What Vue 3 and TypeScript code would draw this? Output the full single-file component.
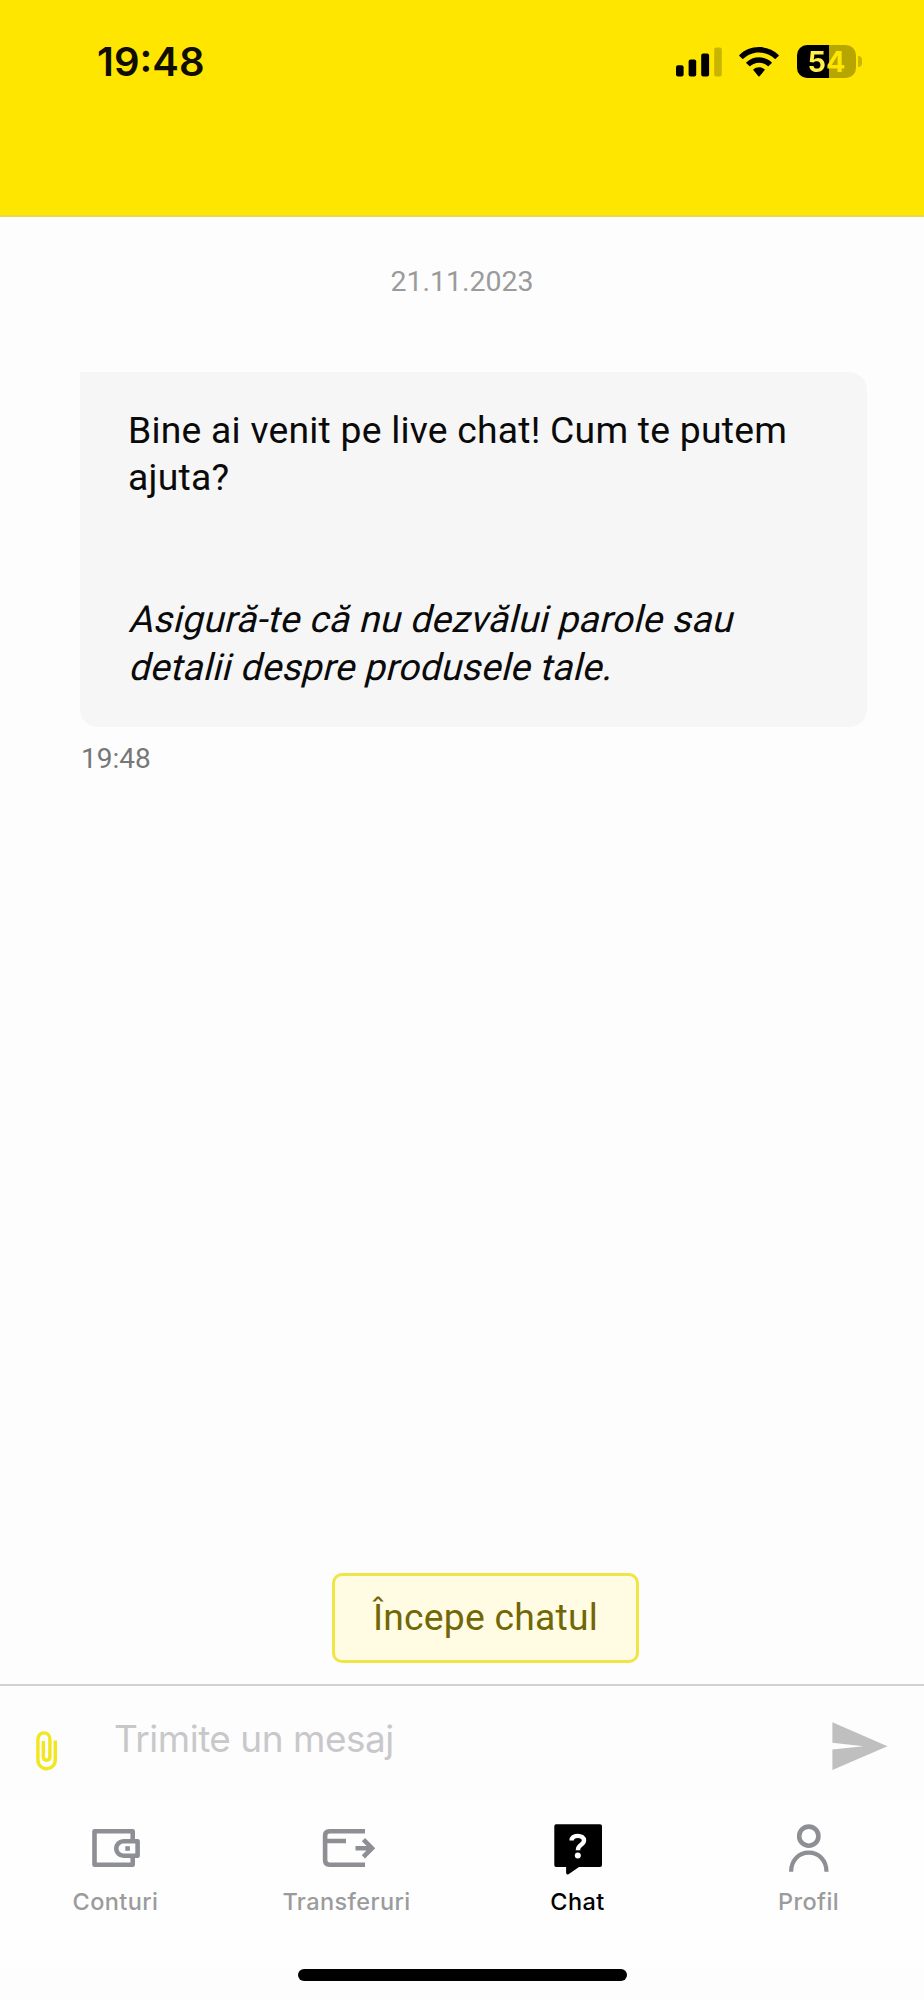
<script setup lang="ts">
interface Tab {
  id: 'accounts' | 'transfers' | 'chat' | 'profile'
  label: string
}

const tabs: Tab[] = [
  { id: 'accounts', label: 'Conturi' },
  { id: 'transfers', label: 'Transferuri' },
  { id: 'chat', label: 'Chat' },
  { id: 'profile', label: 'Profil' },
]
const activeTab: Tab['id'] = 'chat'

const greeting: string[] = ['Bine ai venit pe live chat! Cum te putem', 'ajuta?']
const warning: string[] = ['Asigură-te că nu dezvălui parole sau', 'detalii despre produsele tale.']
</script>

<template>
  <div class="screen">
    <header class="header">
      <span class="clock">19:48</span>
      <div class="status">
        <svg class="signal" width="46" height="30" viewBox="0 0 46 30">
          <rect x="0" y="18.3" width="7.6" height="11.2" rx="2" />
          <rect x="12.6" y="12.6" width="7.6" height="16.9" rx="2" />
          <rect x="25.2" y="6.6" width="7.9" height="22.9" rx="2" />
          <rect x="38.2" y="0.4" width="7.6" height="29.1" rx="2" fill="#c8b500" />
        </svg>
        <svg class="wifi" width="40" height="30" viewBox="0 0 40 30">
          <path d="M20 0C12.400 0 5.400 3 .4 7.900Q0 8.400 .4 8.900L3.300 11.800Q3.800 12.200 4.300 11.800C8.400 7.800 14 5.500 20 5.500S31.600 7.800 35.700 11.800Q36.200 12.200 36.700 11.800L39.600 8.900Q40 8.400 39.600 7.900C34.600 3 27.600 0 20 0Z" />
          <path d="M20 10.200C15.200 10.200 10.700 12.100 7.400 15.200Q6.900 15.700 7.400 16.200L10.300 19.100Q10.800 19.500 11.300 19.100C13.600 17 16.700 15.700 20 15.700S26.400 17 28.700 19.100Q29.200 19.500 29.700 19.100L32.600 16.200Q33.100 15.700 32.600 15.200C29.300 12.100 24.800 10.200 20 10.200Z" />
          <path d="M20 20.300C17.900 20.300 16 21.100 14.500 22.300Q14 22.800 14.500 23.300L19.400 29.200Q20 29.800 20.600 29.200L25.500 23.300Q26 22.800 25.500 22.300C24 21.100 22.100 20.300 20 20.300Z" />
        </svg>
        <div class="battery"><span class="level">54</span></div>
        <i class="nub"></i>
      </div>
    </header>

    <main class="conversation">
      <div class="date">21.11.2023</div>
      <article class="bubble">
        <p class="greeting"><span v-for="l in greeting" :key="l" class="line">{{ l }}</span></p>
        <p class="warning"><span v-for="l in warning" :key="l" class="line">{{ l }}</span></p>
      </article>
      <time class="sent">19:48</time>
      <button class="start" type="button">Începe chatul</button>
    </main>

    <section class="composer">
      <svg class="clip" width="22" height="40" viewBox="0 0 22 40" fill="none" stroke="#f2e71e" stroke-width="3.4">
        <path d="M19.300 9.500V28.500C19.300 34 15.500 37.700 10.500 37.700S1.900 34 1.900 28.500V8.500C1.900 4.600 4.400 1.900 7.900 1.900S13.900 4.600 13.900 8.500V25.500C13.900 28 12.600 29.200 10.600 29.200S7.300 28 7.300 25.500V10" />
      </svg>
      <span class="placeholder">Trimite un mesaj</span>
      <svg class="send" width="56" height="48" viewBox="0 0 56 48" fill="#bfbfbf">
        <path d="M.4 .3L55.500 24.300L.4 48V27.500L31.500 24.300L.4 20.800Z" />
      </svg>
    </section>

    <nav class="tabs">
      <div v-for="tab in tabs" :key="tab.id" class="tab" :class="[tab.id, { active: tab.id === activeTab }]">
        <svg class="icon" width="56" height="54" viewBox="0 0 56 54" fill="none" stroke="#8e8f94" stroke-width="4.600">
          <g v-if="tab.id === 'accounts'" stroke-linejoin="round">
            <path d="M44.700 19V11.300H6.500V44.700H44.700V36" />
            <path d="M49.600 21.200H35.500A7.250 7.250 0 0 0 35.500 35.700H49.600Z" />
            <rect x="37.300" y="26.200" width="4.600" height="4.600" fill="#8e8f94" stroke="none" />
          </g>
          <g v-else-if="tab.id === 'transfers'">
            <path d="M46 11.300H10.500Q6.100 11.300 6.100 15.700V40.300Q6.100 44.700 10.500 44.700H46M6 21H27" />
            <path d="M36.500 28.200H53M44.400 19.600L53 28.200L44.400 36.800" />
          </g>
          <g v-else-if="tab.id === 'chat'" stroke="none">
            <path fill="#000" d="M6 4.300H50Q52 4.300 52 6.300V45Q52 47 50 47H29L18.500 54.200Q16.100 55 16.100 52.500V47H6Q4.300 47 4.300 45V6.300Q4.300 4.300 6 4.300Z" />
            <path d="M21.600 20.500C21.800 16.900 24.500 15.900 27.700 15.900C31.500 15.900 34 17.600 34 20.600C34 24.800 28 24.600 28 29.500V30.200" fill="none" stroke="#fff" stroke-width="4.400" />
            <circle cx="27.800" cy="35.500" r="3" fill="#fff" />
          </g>
          <g v-else>
            <circle cx="27.800" cy="16.200" r="9.600" />
            <path d="M10.100 51.700C10.100 40.500 17.700 32.700 27.800 32.700S45.500 40.500 45.500 51.700" stroke-width="4.200" />
          </g>
        </svg>
        <span class="label">{{ tab.label }}</span>
      </div>
    </nav>
    <div class="home"></div>
  </div>
</template>

<style>
body {
  margin: 0;
}
</style>

<style scoped>
.screen {
  width: 924px;
  height: 2000px;
  display: flex;
  flex-direction: column;
  overflow: hidden;
  background: #fdfdfd;
  font-family: Roboto, sans-serif;
  color: #0a0a0a;
}
.header {
  box-sizing: border-box;
  height: 217px;
  flex: none;
  display: flex;
  justify-content: space-between;
  align-items: flex-start;
  padding: 37px 62px 0 97px;
  background: #ffe600;
  border-bottom: 2px solid #e9d943;
}
.clock {
  margin-top: 1px;
  font: 600 40px/48px Inter, sans-serif;
  color: #100e00;
}
.status {
  display: flex;
  align-items: center;
  padding-top: 8px;
}
.signal {
  margin-right: 17px;
}
.wifi {
  margin-right: 18px;
}
.battery {
  width: 59px;
  height: 33px;
  border-radius: 10px;
  background: linear-gradient(90deg, #000 32px, #b8a600 32px);
  text-align: center;
}
.level {
  font: 700 29px/33px Inter, sans-serif;
  background: linear-gradient(90deg, #fff04a 55%, #ffe600 55%);
  background-clip: text;
  color: transparent;
}
.nub {
  width: 4px;
  height: 11px;
  margin-left: 2px;
  border-radius: 0 5px 5px 0;
  background: #c8b600;
}
.conversation {
  height: 1467px;
  flex: none;
  display: flex;
  flex-direction: column;
}
.date {
  margin-top: 48px;
  text-align: center;
  font-size: 28.500px;
  line-height: 34px;
  color: #9b9b9b;
}
.bubble {
  box-sizing: border-box;
  width: 787px;
  height: 355px;
  margin: 73px 0 0 80px;
  padding: 34.500px 0 0 48px;
  border-radius: 3px 18px 18px 18px;
  background: #f6f6f6;
  font-size: 37.300px;
  line-height: 47.450px;
  letter-spacing: 0.230px;
}
.bubble p {
  margin: 0;
}
.bubble .warning {
  margin-top: 94.900px;
}
.line {
  display: block;
  width: max-content;
  white-space: nowrap;
}
.warning .line {
  transform: skewX(-14deg);
  transform-origin: 0 76%;
}
.sent {
  margin: 15px 0 0 81px;
  font-size: 28px;
  line-height: 34px;
  color: #777;
}
.start {
  box-sizing: border-box;
  width: 307px;
  height: 90px;
  margin: auto 0 21px 332px;
  padding: 0 0 2px;
  border: 3px solid #f0e545;
  border-radius: 10px;
  background: #fffce3;
  font: 400 37.300px/44px Roboto, sans-serif;
  letter-spacing: 0.230px;
  color: #716707;
}
.composer {
  box-sizing: border-box;
  height: 116px;
  flex: none;
  display: flex;
  align-items: flex-start;
  padding: 0 36px;
  border-top: 2px solid #d2d2d2;
}
.clip {
  margin-top: 45px;
}
.placeholder {
  flex: 1;
  margin: 31px 0 0 56px;
  font: 400 37px/44px Inter, sans-serif;
  letter-spacing: -0.500px;
  color: #c8c8ca;
}
.send {
  margin-top: 36px;
}
.tabs {
  height: 169px;
  flex: none;
  display: grid;
  grid-template-columns: repeat(4, 1fr);
  background: #fefefe;
}
.tab {
  display: flex;
  flex-direction: column;
  align-items: center;
  padding-top: 20px;
}
.icon {
  overflow: visible;
}
.label {
  margin-top: 13px;
  font: 500 23.500px/30px Inter, sans-serif;
  letter-spacing: 0.400px;
  color: #9b9b9d;
}
.active .label {
  color: #000;
}
.home {
  width: 329px;
  height: 12px;
  flex: none;
  margin-left: 298px;
  border-radius: 6px;
  background: #000;
}
</style>
